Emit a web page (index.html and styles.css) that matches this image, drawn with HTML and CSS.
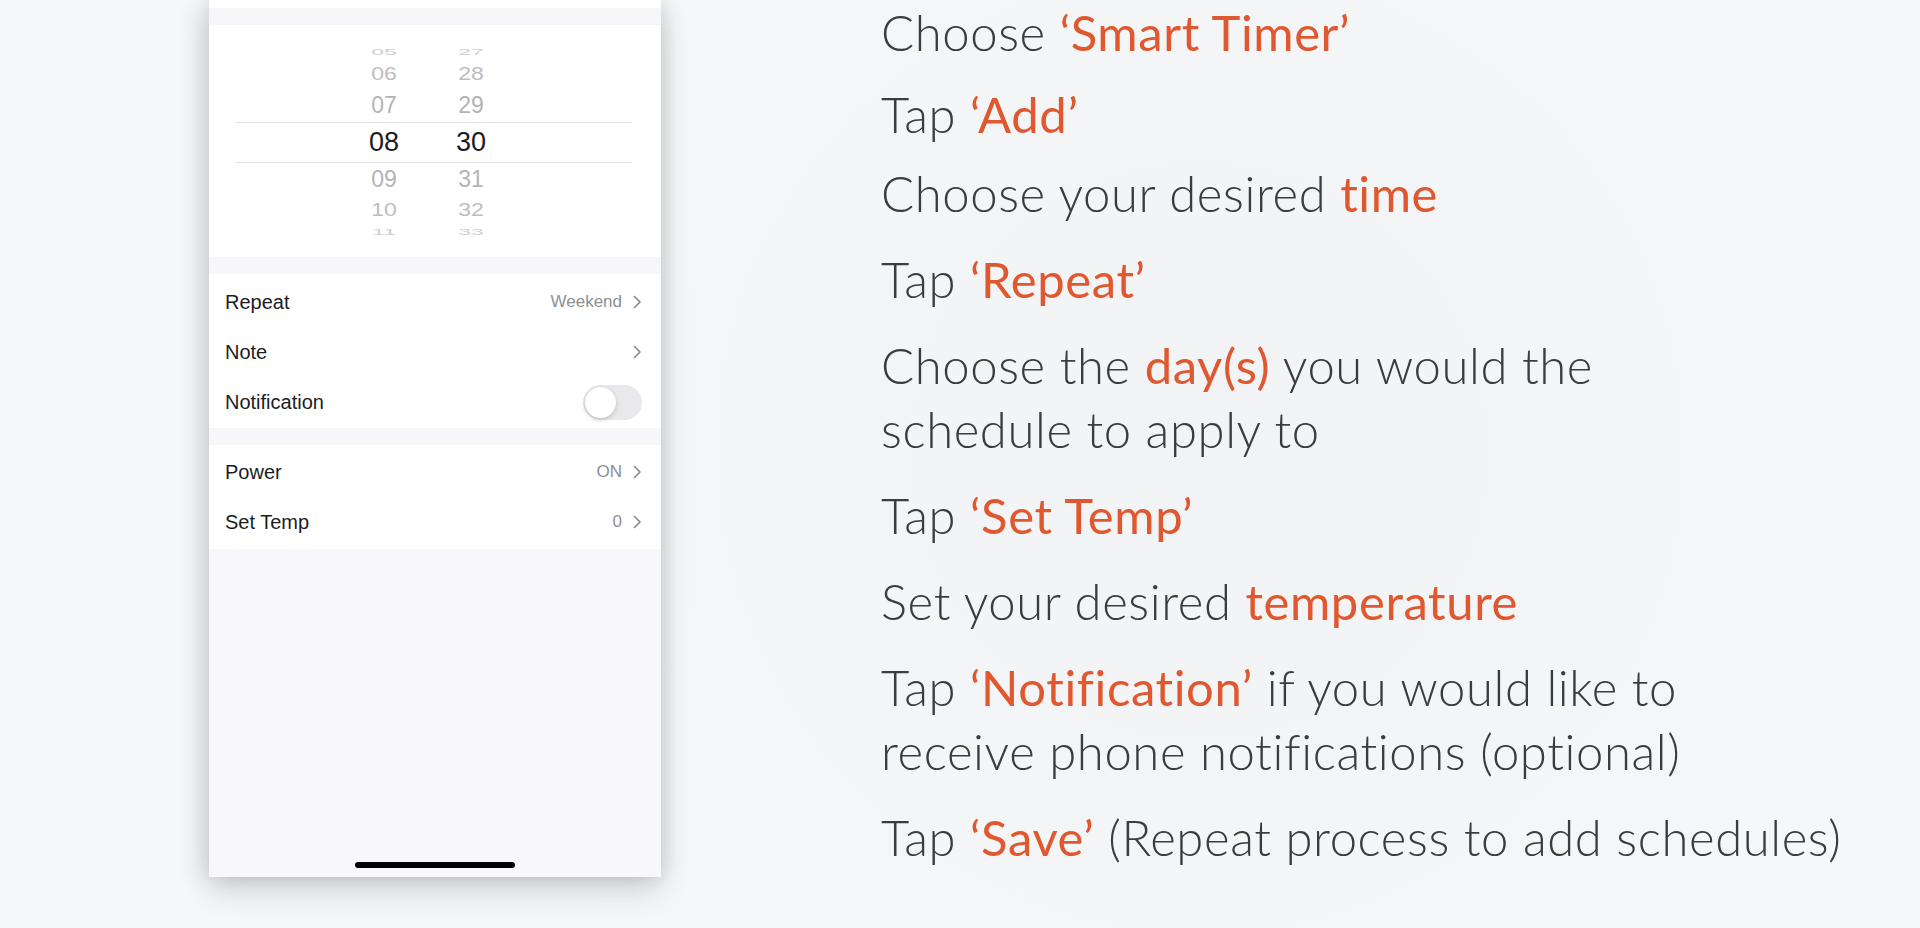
FILE: index.html
```html
<!DOCTYPE html>
<html lang="en">
<head>
    <meta charset="UTF-8">
    <meta name="viewport" content="width=device-width, initial-scale=1.0">
    <title>Smart Timer - Add Schedule</title>
    <link rel="stylesheet" href="styles.css">
</head>
<body>
    <div class="phone">
        <div class="top-strip"></div>
        <div class="gap"></div>

        <div class="picker">
            <div class="picker-line picker-line-top"></div>
            <div class="picker-line picker-line-bottom"></div>
            <div class="wheel">
                <div class="wheel-col">
                    <span class="digit far">05</span>
                    <span class="digit near2">06</span>
                    <span class="digit near">07</span>
                    <span class="digit selected">08</span>
                    <span class="digit near">09</span>
                    <span class="digit near2">10</span>
                    <span class="digit far">11</span>
                </div>
                <div class="wheel-col">
                    <span class="digit far">27</span>
                    <span class="digit near2">28</span>
                    <span class="digit near">29</span>
                    <span class="digit selected">30</span>
                    <span class="digit near">31</span>
                    <span class="digit near2">32</span>
                    <span class="digit far">33</span>
                </div>
            </div>
        </div>

        <div class="gap"></div>

        <div class="group group-first">
            <div class="row">
                <span class="label">Repeat</span>
                <span class="value">Weekend
                    <svg class="chevron" viewBox="0 0 10 16"><path d="M2 2 L8 8 L2 14" /></svg>
                </span>
            </div>
            <div class="row">
                <span class="label">Note</span>
                <span class="value">
                    <svg class="chevron" viewBox="0 0 10 16"><path d="M2 2 L8 8 L2 14" /></svg>
                </span>
            </div>
            <div class="row">
                <span class="label">Notification</span>
                <span class="toggle"><span class="knob"></span></span>
            </div>
        </div>

        <div class="gap"></div>

        <div class="group group-second">
            <div class="row">
                <span class="label">Power</span>
                <span class="value">ON
                    <svg class="chevron" viewBox="0 0 10 16"><path d="M2 2 L8 8 L2 14" /></svg>
                </span>
            </div>
            <div class="row">
                <span class="label">Set Temp</span>
                <span class="value">0
                    <svg class="chevron" viewBox="0 0 10 16"><path d="M2 2 L8 8 L2 14" /></svg>
                </span>
            </div>
        </div>

        <div class="bottom">
            <div class="home-bar"></div>
        </div>
    </div>

    <div class="steps">
        <p class="step-1">Choose <em>‘Smart Timer’</em></p>
        <p class="step-2">Tap <em>‘Add’</em></p>
        <p>Choose your desired <em>time</em></p>
        <p>Tap <em>‘Repeat’</em></p>
        <p>Choose the <em>day(s)</em> you would the<br>schedule to apply to</p>
        <p>Tap <em>‘Set Temp’</em></p>
        <p>Set your desired <em>temperature</em></p>
        <p>Tap <em>‘Notification’</em> if you would like to<br>receive phone notifications (optional)</p>
        <p>Tap <em>‘Save’</em> (Repeat process to add schedules)</p>
    </div>
</body>
</html>
```

FILE: styles.css
```css
body {
    margin: 0;
    height: 928px;
    overflow: hidden;
    display: flex;
    align-items: flex-start;
    background-color: #f5f6f8;
    background-image: radial-gradient(circle at 1200px 450px, #f2f3f5 0, #f6f7f9 60%);
}

.phone {
    margin-left: 209px;
    width: 452px;
    height: 877px;
    display: flex;
    flex-direction: column;
    background-color: #f8f8fa;
    box-shadow: 0 14px 30px rgba(0, 0, 0, 0.14), -8px 0 24px rgba(0, 0, 0, 0.09), 6px 0 16px rgba(0, 0, 0, 0.06);
    font-family: 'Liberation Sans', Arial, sans-serif;
}

.top-strip {
    height: 8px;
    background-color: #fff;
}

.gap {
    height: 17px;
    background-color: #f7f7f9;
}

.picker {
    position: relative;
    height: 232px;
    background-color: #fff;
}

.picker-line {
    position: absolute;
    left: 27px;
    right: 29px;
    height: 1px;
    background-color: #e3e3e6;
}

.picker-line-top {
    top: 97px;
}

.picker-line-bottom {
    top: 137px;
}

.wheel {
    display: flex;
    justify-content: center;
    gap: 27px;
    padding-top: 19px;
    padding-right: 15px;
}

.wheel-col {
    width: 60px;
    display: flex;
    flex-direction: column;
    align-items: center;
}

.digit {
    display: flex;
    align-items: center;
    justify-content: center;
    color: #b4b4b8;
    font-size: 23px;
}

.digit.far {
    height: 16px;
    transform: scaleY(0.4);
    color: #cfcfd3;
}

.digit.near2 {
    height: 28px;
    transform: scaleY(0.78);
    color: #bdbdc1;
}

.digit.near {
    height: 34px;
}

.digit.selected {
    height: 40px;
    font-size: 27px;
    color: #1c1c1e;
}

.group {
    background-color: #fff;
}

.group-first {
    padding: 3px 0 1px;
}

.group-second {
    padding: 2px 0;
}

.row {
    height: 50px;
    display: flex;
    align-items: center;
    justify-content: space-between;
    padding: 0 19px 0 16px;
}

.label {
    font-size: 20px;
    color: #1c1c1e;
}

.value {
    display: flex;
    align-items: center;
    gap: 10px;
    font-size: 17px;
    color: #8e8e93;
}

.chevron {
    width: 10px;
    height: 16px;
    fill: none;
    stroke: #8a8a8e;
    stroke-width: 1.6;
}

.toggle {
    position: relative;
    width: 59px;
    height: 35px;
    border-radius: 18px;
    background-color: #e9e9eb;
}

.knob {
    position: absolute;
    left: 2px;
    top: 2px;
    width: 31px;
    height: 31px;
    border-radius: 50%;
    background-color: #fff;
    box-shadow: 0 2px 5px rgba(0, 0, 0, 0.16), 0 0 0 0.5px rgba(0, 0, 0, 0.06);
}

.bottom {
    flex: 1;
    display: flex;
    align-items: flex-end;
    justify-content: center;
    padding-bottom: 9px;
    background-color: #f8f8fa;
}

.home-bar {
    width: 160px;
    height: 6px;
    border-radius: 3px;
    background-color: #000;
}

.steps {
    margin-left: 220px;
    font-family: Lato, 'Open Sans', sans-serif;
    font-weight: 300;
    font-size: 49px;
    letter-spacing: 0.6px;
    line-height: 64px;
    color: #3c3c3e;
}

.steps p {
    margin: 0 0 22px;
}

.steps .step-1 {
    margin-bottom: 18px;
}

.steps .step-2 {
    margin-bottom: 15px;
}

.steps em {
    font-style: normal;
    font-weight: 400;
    color: #e0582f;
}
```
